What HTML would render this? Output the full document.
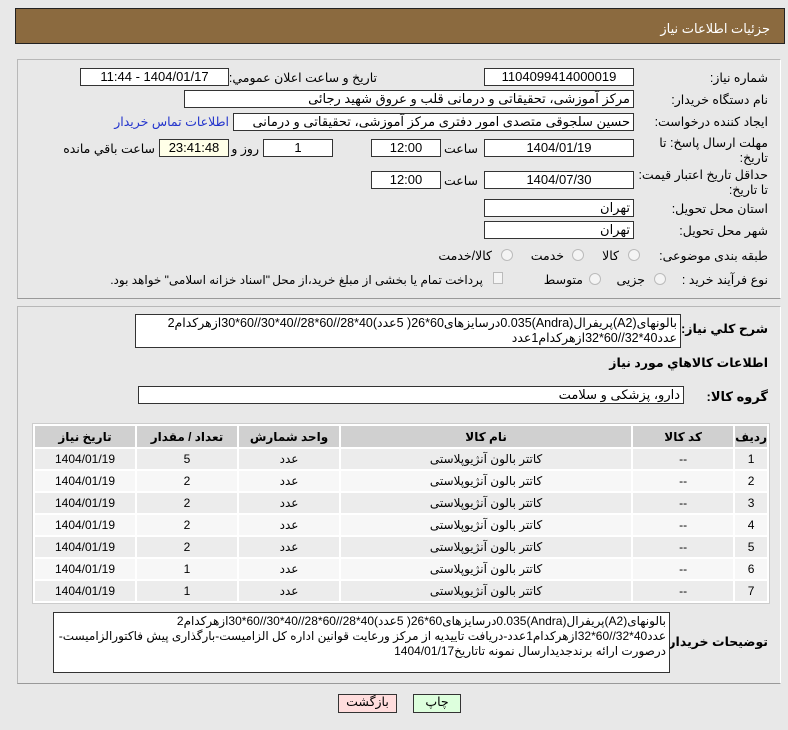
<!DOCTYPE html>
<html><head><meta charset="utf-8"><style>
*{box-sizing:border-box;margin:0;padding:0}
body{width:788px;height:730px;background:#e8e8e8;font-family:"Liberation Sans","DejaVu Sans",sans-serif;font-size:12px;color:#000;position:relative;overflow:hidden;direction:rtl}
.a{position:absolute;white-space:nowrap}
.hdr{left:15px;top:8px;width:770px;height:36px;background:#8b6a3f;border:1px solid #222;color:#fff;font-size:13px;padding:12px 14px 0 0}
.panel{position:absolute;left:17px;width:764px;border:1px solid #b8b8b8;border-right-color:#fff;border-bottom-color:#999}
.box{position:absolute;background:#fff;border:1px solid #333;text-align:center;font-size:13px;line-height:15px}
.lbl{position:absolute;white-space:nowrap;font-size:12.5px;line-height:15px}
table{position:absolute;left:32px;top:423px;width:738px;border-collapse:separate;border-spacing:2px;background:#fff;border:1px solid #ccc}
td,th{height:20px;text-align:center;font-size:12px}
th{background:#d0d0d0;height:21px;font-weight:bold}
tr:nth-child(odd) td{background:#f7f7f7}
tr:nth-child(even) td{background:#ececec}
.radio{position:absolute;width:12px;height:12px;border:1px solid #bbb;border-radius:50%;background:#f4f4f4}
</style></head><body>
<div class="a hdr">جزئیات اطلاعات نیاز</div>
<div class="panel" style="top:59px;height:240px"></div>
<div class="panel" style="top:306px;height:378px"></div>

<div class="lbl" style="right:20px;top:71px">شماره نیاز:</div>
<div class="box" style="left:484px;top:68px;width:150px;height:18px">1104099414000019</div>
<div class="lbl" style="right:411px;top:71px">تاریخ و ساعت اعلان عمومي:</div>
<div class="box" style="left:80px;top:68px;width:149px;height:18px">1404/01/17 - 11:44</div>

<div class="lbl" style="right:20px;top:93px">نام دستگاه خریدار:</div>
<div class="box" style="left:184px;top:90px;width:450px;height:18px;text-align:right;padding-right:3px">مرکز آموزشی، تحقیقاتی و درمانی قلب و عروق شهید رجائی</div>

<div class="lbl" style="right:20px;top:115px">ایجاد کننده درخواست:</div>
<div class="box" style="left:233px;top:113px;width:401px;height:18px;text-align:right;padding-right:3px;overflow:hidden">حسین سلجوقی متصدی امور دفتری مرکز آموزشی، تحقیقاتی و درمانی قلب و ع</div>
<div class="lbl" style="right:559px;top:115px;color:#2233cc">اطلاعات تماس خریدار</div>

<div class="lbl" style="right:20px;top:136px">مهلت ارسال پاسخ: تا<br>تاریخ:</div>
<div class="box" style="left:484px;top:139px;width:150px;height:18px">1404/01/19</div>
<div class="lbl" style="right:310px;top:142px">ساعت</div>
<div class="box" style="left:371px;top:139px;width:70px;height:18px">12:00</div>
<div class="box" style="left:263px;top:139px;width:70px;height:18px">1</div>
<div class="lbl" style="right:529px;top:142px">روز و</div>
<div class="box" style="left:159px;top:139px;width:70px;height:18px;background:#ffffe8">23:41:48</div>
<div class="lbl" style="right:633px;top:142px">ساعت باقي مانده</div>

<div class="lbl" style="right:20px;top:168px">حداقل تاریخ اعتبار قیمت:<br>تا تاریخ:</div>
<div class="box" style="left:484px;top:171px;width:150px;height:18px">1404/07/30</div>
<div class="lbl" style="right:310px;top:174px">ساعت</div>
<div class="box" style="left:371px;top:171px;width:70px;height:18px">12:00</div>

<div class="lbl" style="right:20px;top:202px">استان محل تحویل:</div>
<div class="box" style="left:484px;top:199px;width:150px;height:18px;text-align:right;padding-right:3px">تهران</div>
<div class="lbl" style="right:20px;top:224px">شهر محل تحویل:</div>
<div class="box" style="left:484px;top:221px;width:150px;height:18px;text-align:right;padding-right:3px">تهران</div>

<div class="lbl" style="right:20px;top:249px">طبقه بندی موضوعی:</div>
<div class="radio" style="left:628px;top:249px"></div>
<div class="lbl" style="right:169px;top:249px">کالا</div>
<div class="radio" style="left:572px;top:249px"></div>
<div class="lbl" style="right:224px;top:249px">خدمت</div>
<div class="radio" style="left:501px;top:249px"></div>
<div class="lbl" style="right:296px;top:249px">کالا/خدمت</div>

<div class="lbl" style="right:20px;top:273px">نوع فرآیند خرید :</div>
<div class="radio" style="left:654px;top:273px"></div>
<div class="lbl" style="right:143px;top:273px">جزیی</div>
<div class="radio" style="left:589px;top:273px"></div>
<div class="lbl" style="right:205px;top:273px">متوسط</div>
<div class="a" style="left:493px;top:272px;width:10px;height:12px;border:1px solid #bbb;background:#f4f4f4"></div>
<div class="lbl" style="right:305px;top:273px;font-size:12px">پرداخت تمام یا بخشی از مبلغ خرید،از محل</div>
<div class="lbl" style="right:518px;top:273px;font-size:12px">"اسناد خزانه اسلامی" خواهد بود.</div>

<div class="lbl" style="right:20px;top:322px;font-weight:bold">شرح كلي نياز:</div>
<div class="box" style="left:135px;top:314px;width:546px;height:34px;text-align:right;padding:1px 3px;font-size:12.5px">بالونهای(A2)پریفرال(Andra)0.035درسایزهای60*26( 5عدد)40*28//60*28//40*30//60*30ازهرکدام2<br>عدد40*32//60*32ازهرکدام1عدد</div>
<div class="lbl" style="right:20px;top:356px;font-weight:bold">اطلاعات كالاهاي مورد نياز</div>
<div class="lbl" style="right:20px;top:389px;font-weight:bold;font-size:13px">گروه کالا:</div>
<div class="box" style="left:138px;top:386px;width:546px;height:18px;text-align:right;padding-right:3px">دارو، پزشکی و سلامت</div>

<table>
<tr><th style="width:26px">ردیف</th><th style="width:100px">کد کالا</th><th>نام کالا</th><th style="width:100px">واحد شمارش</th><th style="width:100px">تعداد / مقدار</th><th style="width:100px">تاریخ نیاز</th></tr>
<tr><td>1</td><td>--</td><td>کاتتر بالون آنژیوپلاستی</td><td>عدد</td><td>5</td><td>1404/01/19</td></tr>
<tr><td>2</td><td>--</td><td>کاتتر بالون آنژیوپلاستی</td><td>عدد</td><td>2</td><td>1404/01/19</td></tr>
<tr><td>3</td><td>--</td><td>کاتتر بالون آنژیوپلاستی</td><td>عدد</td><td>2</td><td>1404/01/19</td></tr>
<tr><td>4</td><td>--</td><td>کاتتر بالون آنژیوپلاستی</td><td>عدد</td><td>2</td><td>1404/01/19</td></tr>
<tr><td>5</td><td>--</td><td>کاتتر بالون آنژیوپلاستی</td><td>عدد</td><td>2</td><td>1404/01/19</td></tr>
<tr><td>6</td><td>--</td><td>کاتتر بالون آنژیوپلاستی</td><td>عدد</td><td>1</td><td>1404/01/19</td></tr>
<tr><td>7</td><td>--</td><td>کاتتر بالون آنژیوپلاستی</td><td>عدد</td><td>1</td><td>1404/01/19</td></tr>
</table>

<div class="lbl" style="right:20px;top:635px;font-weight:bold">توضیحات خریدار:</div>
<div class="box" style="left:53px;top:612px;width:617px;height:61px;text-align:right;padding:1px 3px;font-size:12px;white-space:nowrap;overflow:hidden">بالونهای(A2)پریفرال(Andra)0.035درسایزهای60*26( 5عدد)40*28//60*28//40*30//60*30ازهرکدام2<br>عدد40*32//60*32ازهرکدام1عدد-دریافت تاییدیه از مرکز ورعایت قوانین اداره کل الزامیست-بارگذاری پیش فاکتورالزامیست-<br>درصورت ارائه برندجدیدارسال نمونه تاتاریخ1404/01/17</div>

<div class="box" style="left:338px;top:694px;width:59px;height:19px;background:#fdd;font-size:12.5px">بازگشت</div>
<div class="box" style="left:413px;top:694px;width:48px;height:19px;background:#dfd;font-size:12.5px">چاپ</div>
</body></html>
